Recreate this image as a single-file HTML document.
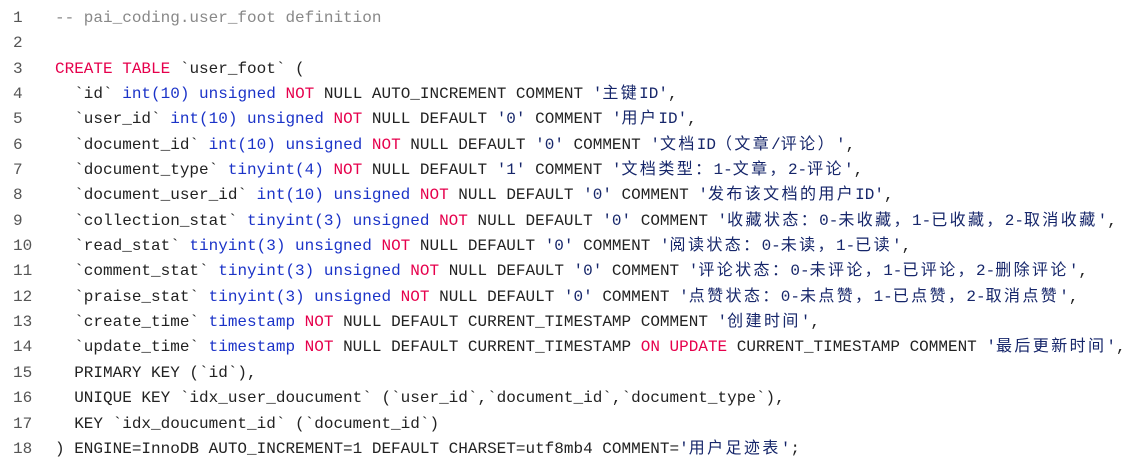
<!DOCTYPE html>
<html><head><meta charset="utf-8"><style>
body{margin:0;background:#fff;width:1131px;height:463px;overflow:hidden}
.c{position:absolute;top:6px;left:0;font:16px/25.35px "Liberation Mono","Noto Sans CJK SC",monospace;color:#222;white-space:pre}
.n{display:inline-block;width:55px;padding-left:13px;box-sizing:border-box;color:#555}
.k{color:#e6004c}.t{color:#1b33c8}.s{color:#16266a}.g{color:#888}
i{font-style:normal;letter-spacing:2.4px}
</style></head><body><div class="c"><div><span class="n">1</span><span class="g">-- pai_coding.user_foot definition</span></div><div><span class="n">2</span></div><div><span class="n">3</span><span class="k">CREATE</span> <span class="k">TABLE</span> `user_foot` (</div><div><span class="n">4</span>  `id` <span class="t">int(10)</span> <span class="t">unsigned</span> <span class="k">NOT</span> NULL AUTO_INCREMENT COMMENT <span class="s">'<i>主键</i>ID'</span>,</div><div><span class="n">5</span>  `user_id` <span class="t">int(10)</span> <span class="t">unsigned</span> <span class="k">NOT</span> NULL DEFAULT <span class="s">'0'</span> COMMENT <span class="s">'<i>用户</i>ID'</span>,</div><div><span class="n">6</span>  `document_id` <span class="t">int(10)</span> <span class="t">unsigned</span> <span class="k">NOT</span> NULL DEFAULT <span class="s">'0'</span> COMMENT <span class="s">'<i>文档</i>ID<i>（文章</i>/<i>评论）</i>'</span>,</div><div><span class="n">7</span>  `document_type` <span class="t">tinyint(4)</span> <span class="k">NOT</span> NULL DEFAULT <span class="s">'1'</span> COMMENT <span class="s">'<i>文档类型：</i>1-<i>文章，</i>2-<i>评论</i>'</span>,</div><div><span class="n">8</span>  `document_user_id` <span class="t">int(10)</span> <span class="t">unsigned</span> <span class="k">NOT</span> NULL DEFAULT <span class="s">'0'</span> COMMENT <span class="s">'<i>发布该文档的用户</i>ID'</span>,</div><div><span class="n">9</span>  `collection_stat` <span class="t">tinyint(3)</span> <span class="t">unsigned</span> <span class="k">NOT</span> NULL DEFAULT <span class="s">'0'</span> COMMENT <span class="s">'<i>收藏状态：</i>0-<i>未收藏，</i>1-<i>已收藏，</i>2-<i>取消收藏</i>'</span>,</div><div><span class="n">10</span>  `read_stat` <span class="t">tinyint(3)</span> <span class="t">unsigned</span> <span class="k">NOT</span> NULL DEFAULT <span class="s">'0'</span> COMMENT <span class="s">'<i>阅读状态：</i>0-<i>未读，</i>1-<i>已读</i>'</span>,</div><div><span class="n">11</span>  `comment_stat` <span class="t">tinyint(3)</span> <span class="t">unsigned</span> <span class="k">NOT</span> NULL DEFAULT <span class="s">'0'</span> COMMENT <span class="s">'<i>评论状态：</i>0-<i>未评论，</i>1-<i>已评论，</i>2-<i>删除评论</i>'</span>,</div><div><span class="n">12</span>  `praise_stat` <span class="t">tinyint(3)</span> <span class="t">unsigned</span> <span class="k">NOT</span> NULL DEFAULT <span class="s">'0'</span> COMMENT <span class="s">'<i>点赞状态：</i>0-<i>未点赞，</i>1-<i>已点赞，</i>2-<i>取消点赞</i>'</span>,</div><div><span class="n">13</span>  `create_time` <span class="t">timestamp</span> <span class="k">NOT</span> NULL DEFAULT CURRENT_TIMESTAMP COMMENT <span class="s">'<i>创建时间</i>'</span>,</div><div><span class="n">14</span>  `update_time` <span class="t">timestamp</span> <span class="k">NOT</span> NULL DEFAULT CURRENT_TIMESTAMP <span class="k">ON</span> <span class="k">UPDATE</span> CURRENT_TIMESTAMP COMMENT <span class="s">'<i>最后更新时间</i>'</span>,</div><div><span class="n">15</span>  PRIMARY KEY (`id`),</div><div><span class="n">16</span>  UNIQUE KEY `idx_user_doucument` (`user_id`,`document_id`,`document_type`),</div><div><span class="n">17</span>  KEY `idx_doucument_id` (`document_id`)</div><div><span class="n">18</span>) ENGINE=InnoDB AUTO_INCREMENT=1 DEFAULT CHARSET=utf8mb4 COMMENT=<span class="s">'<i>用户足迹表</i>'</span>;</div></div></body></html>
